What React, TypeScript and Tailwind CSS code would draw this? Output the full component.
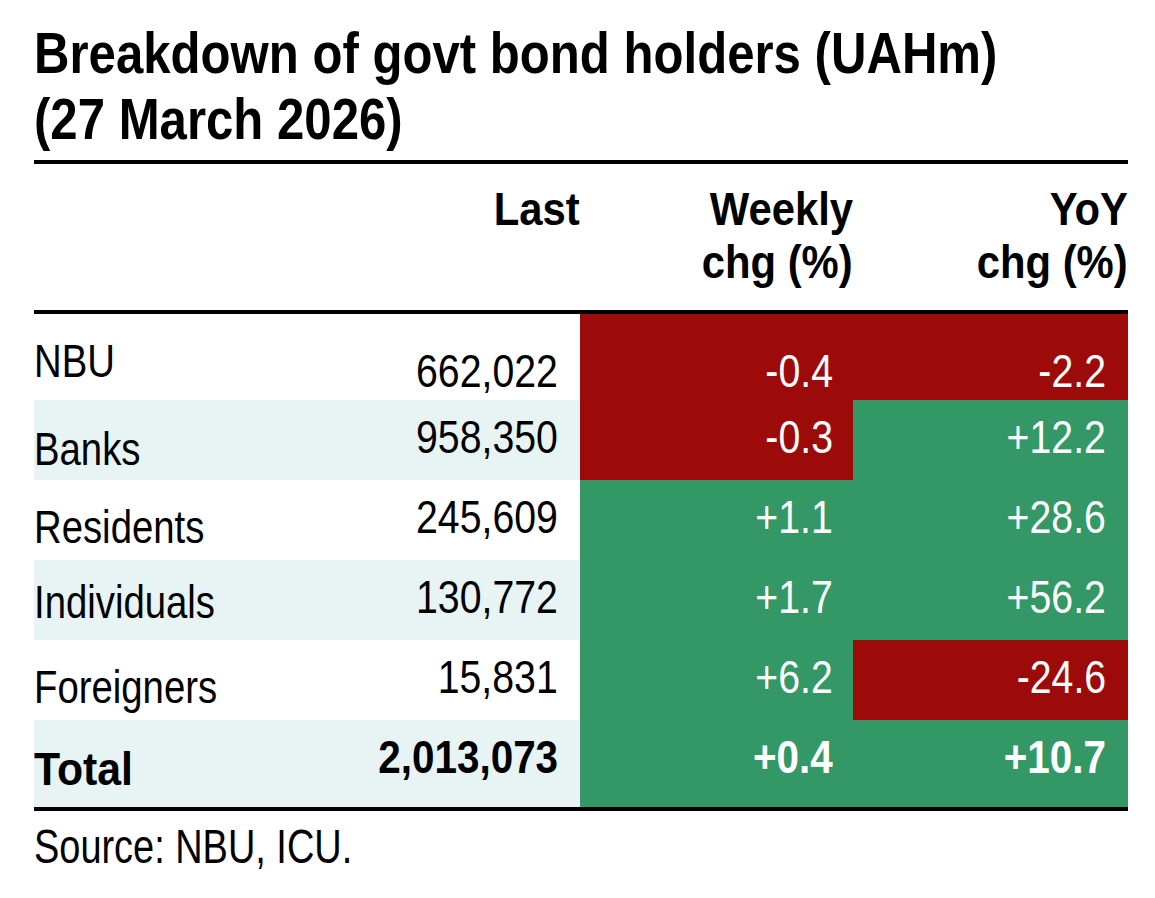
import React from "react";

type Cell = { v: string; c: "r" | "g" };
type Row = {
  label: string;
  last: string;
  w: Cell;
  y: Cell;
  light: boolean;
  bold?: boolean;
  h: string;
  lpt: string;
  npt: string;
};

const rows: Row[] = [
  { label: "NBU", last: "662,022", w: { v: "-0.4", c: "r" }, y: { v: "-2.2", c: "r" }, light: false, h: "h-[86px]", lpt: "pt-[23px]", npt: "pt-[33px]" },
  { label: "Banks", last: "958,350", w: { v: "-0.3", c: "r" }, y: { v: "+12.2", c: "g" }, light: true, h: "h-[80px]", lpt: "pt-[25px]", npt: "pt-[13px]" },
  { label: "Residents", last: "245,609", w: { v: "+1.1", c: "g" }, y: { v: "+28.6", c: "g" }, light: false, h: "h-[80px]", lpt: "pt-[23px]", npt: "pt-[13px]" },
  { label: "Individuals", last: "130,772", w: { v: "+1.7", c: "g" }, y: { v: "+56.2", c: "g" }, light: true, h: "h-[80px]", lpt: "pt-[18px]", npt: "pt-[13px]" },
  { label: "Foreigners", last: "15,831", w: { v: "+6.2", c: "g" }, y: { v: "-24.6", c: "r" }, light: false, h: "h-[80px]", lpt: "pt-[23px]", npt: "pt-[13px]" },
  { label: "Total", last: "2,013,073", w: { v: "+0.4", c: "g" }, y: { v: "+10.7", c: "g" }, light: true, bold: true, h: "h-[87px]", lpt: "pt-[25px]", npt: "pt-[13px]" },
];

const font = { fontFamily: '"Liberation Sans", Arial, sans-serif' };

function L({ children, bold }: { children: React.ReactNode; bold?: boolean }) {
  return (
    <span className={`inline-block whitespace-nowrap origin-left ${bold ? "scale-x-[0.91]" : "scale-x-[0.815]"}`}>{children}</span>
  );
}

function R({ children, bold }: { children: React.ReactNode; bold?: boolean }) {
  return (
    <span className={`inline-block whitespace-nowrap origin-right ${bold ? "scale-x-[0.86]" : "scale-x-[0.835]"}`}>{children}</span>
  );
}

function H({ children }: { children: React.ReactNode }) {
  return <span className="inline-block whitespace-nowrap origin-right scale-x-[0.89]">{children}</span>;
}

export default function App() {
  return (
    <div className="w-[1155px] h-[898px] bg-white text-black overflow-hidden" style={font}>
      <div className="pl-[34px] pt-[20px] w-[1128px]">
        <h1 className="text-[58px] leading-[66px] font-bold mb-[8px]">
          <span className="block whitespace-nowrap origin-left scale-x-[0.847]">Breakdown of govt bond holders (UAHm)</span>
          <span className="block whitespace-nowrap origin-left scale-x-[0.847]">(27 March 2026)</span>
        </h1>
        <div className="border-t-4 border-black w-[1094px]">
          <div className="grid grid-cols-[300px_246px_273px_275px] h-[150px] border-b-4 border-black font-bold text-[47px] leading-[53px] pt-[18px]">
            <div />
            <div className="text-right">
              <H>Last</H>
            </div>
            <div className="text-right">
              <H>Weekly</H>
              <br />
              <H>chg (%)</H>
            </div>
            <div className="text-right">
              <H>YoY</H>
              <br />
              <H>chg (%)</H>
            </div>
          </div>
          {rows.map((r) => (
            <div
              key={r.label}
              className={`grid grid-cols-[300px_246px_273px_275px] ${r.h} text-[47px] leading-[47px] ${r.bold ? "font-bold" : ""}`}
            >
              <div className={`${r.light ? "bg-[#e8f4f4]" : "bg-white"} ${r.lpt}`}>
                <L bold={r.bold}>{r.label}</L>
              </div>
              <div className={`${r.light ? "bg-[#e8f4f4]" : "bg-white"} ${r.npt} text-right pr-[22px]`}>
                <R bold={r.bold}>{r.last}</R>
              </div>
              <div className={`${r.w.c === "r" ? "bg-[#9c0a0a]" : "bg-[#339866]"} ${r.npt} text-right pr-[20px] text-white`}>
                <R bold={r.bold}>{r.w.v}</R>
              </div>
              <div className={`${r.y.c === "r" ? "bg-[#9c0a0a]" : "bg-[#339866]"} ${r.npt} text-right pr-[22px] text-white`}>
                <R bold={r.bold}>{r.y.v}</R>
              </div>
            </div>
          ))}
          <div className="border-t-4 border-black" />
        </div>
        <div className="text-[48px] leading-[48px] mt-[12px]">
          <span className="inline-block whitespace-nowrap origin-left scale-x-[0.79]">Source: NBU, ICU.</span>
        </div>
      </div>
    </div>
  );
}
